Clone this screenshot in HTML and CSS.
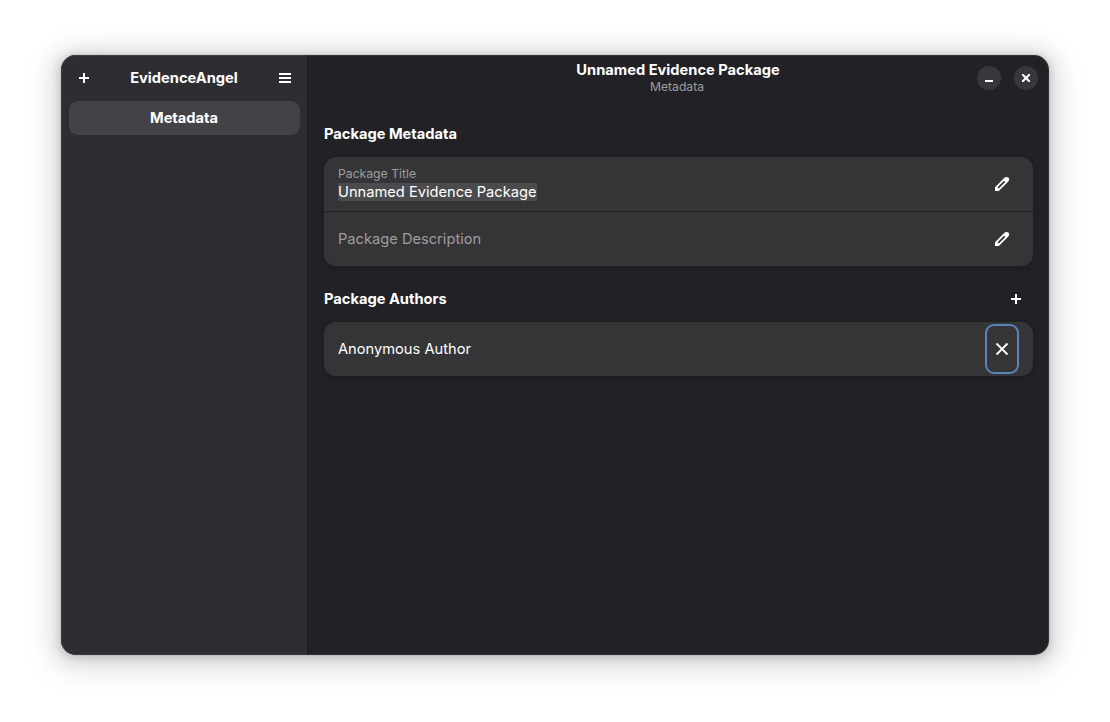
FILE: index.html
```
<!DOCTYPE html>
<html lang="en">
<head>
<meta charset="utf-8">
<title>EvidenceAngel</title>
<link rel="stylesheet" href="styles.css">
</head>
<body>
<div class="window">
  <aside class="sidebar">
    <header class="sidebar-header">
      <button class="icon-button" aria-label="Add"><svg class="icon" viewBox="0 0 16 16"><path d="M7 3h2v4h4v2H9v4H7V9H3V7h4z"/></svg></button>
      <h1 class="app-name">EvidenceAngel</h1>
      <button class="icon-button" aria-label="Menu"><svg class="icon" viewBox="0 0 16 16"><path d="M2 3h12v2H2zM2 7h12v2H2zM2 11h12v2H2z"/></svg></button>
    </header>
    <nav class="nav"><a class="nav-item">Metadata</a></nav>
  </aside>
  <main class="content">
    <header class="content-header">
      <div class="titles">
        <div class="title">Unnamed Evidence Package</div>
        <div class="subtitle">Metadata</div>
      </div>
      <div class="controls">
        <button class="window-button" aria-label="Minimize"><svg class="icon" viewBox="0 0 16 16"><path d="M4 10h8v2H4z"/></svg></button>
        <button class="window-button" aria-label="Close"><svg class="icon" viewBox="0 0 16 16"><path d="M4 4h1.500L8 6.500 10.500 4H12v1.500L9.500 8 12 10.500V12h-1.500L8 9.500 5.500 12H4v-1.500L6.500 8 4 5.500z"/></svg></button>
      </div>
    </header>
    <section class="group">
      <div class="group-header"><h2 class="group-title">Package Metadata</h2></div>
      <div class="card">
        <div class="row">
          <div class="field">
            <div class="field-label">Package Title</div>
            <div class="field-value"><span class="selected">Unnamed Evidence Package</span></div>
          </div>
          <svg class="icon edit" viewBox="0 0 16 16"><path fill-rule="evenodd" d="M10.200 1.900C11.400.700 13.200.500 14.400 1.600S15.300 4.600 14.100 5.800L5.300 14.500 4.800 15H1v-3.800l.500-.500zM10 4.700 4 10.700a.9.9 0 0 0 0 1.300.9.9 0 0 0 1.300 0L11.300 6z"/></svg>
        </div>
        <div class="row">
          <div class="placeholder">Package Description</div>
          <svg class="icon edit" viewBox="0 0 16 16"><path fill-rule="evenodd" d="M10.200 1.900C11.400.700 13.200.500 14.400 1.600S15.300 4.600 14.100 5.800L5.300 14.500 4.800 15H1v-3.800l.500-.500zM10 4.700 4 10.700a.9.9 0 0 0 0 1.300.9.9 0 0 0 1.300 0L11.300 6z"/></svg>
        </div>
      </div>
    </section>
    <section class="group">
      <div class="group-header">
        <h2 class="group-title">Package Authors</h2>
        <button class="icon-button" aria-label="Add author"><svg class="icon" viewBox="0 0 16 16"><path d="M7 3h2v4h4v2H9v4H7V9H3V7h4z"/></svg></button>
      </div>
      <div class="card">
        <div class="row">
          <div class="field-value">Anonymous Author</div>
          <button class="remove" aria-label="Remove author"><svg class="icon" viewBox="0 0 16 16"><path class="cross" d="M2.500 2.500 13.500 13.500M13.500 2.500 2.500 13.500"/></svg></button>
        </div>
      </div>
    </section>
  </main>
</div>
</body>
</html>
```

FILE: styles.css
```
* { box-sizing: border-box; }
body {
  margin: 0;
  padding: 55px 61px 67px;
  height: 722px;
  background: #fff;
  color: #fff;
  font: 14.667px/18px Inter, sans-serif;
  overflow: hidden;
}
h1, h2 { margin: 0; font-size: inherit; font-weight: 700; }
button { border: 0; padding: 0; background: none; color: inherit; display: flex; align-items: center; justify-content: center; }
.icon { width: 16px; height: 16px; fill: currentColor; display: block; flex: none; }
.window {
  display: flex;
  height: 600px;
  border-radius: 15px;
  background: #222226;
  box-shadow: 0 2px 8px 2px rgba(0,0,0,.13), 0 3px 20px 10px rgba(0,0,0,.09), 0 6px 32px 16px rgba(0,0,0,.04), 0 0 0 1px rgba(0,0,0,.05);
  position: relative;
}
.window::after {
  content: "";
  position: absolute;
  inset: 0;
  border-radius: inherit;
  box-shadow: inset 0 0 0 1px rgba(255,255,255,.07);
  pointer-events: none;
}
.sidebar {
  width: 246px;
  background: #2e2e32;
  border-radius: 15px 0 0 15px;
}
.sidebar-header {
  height: 46px;
  padding: 0 5px 0 6px;
  display: flex;
  align-items: center;
  justify-content: space-between;
}
.app-name { padding-right: 1px; }
.icon-button { width: 34px; height: 34px; }
.nav { padding: 0 7px 0 8px; }
.nav-item {
  display: flex;
  align-items: center;
  justify-content: center;
  height: 34px;
  padding-right: 1px;
  border-radius: 9px;
  background: #434347;
  font-weight: 700;
}
.content { flex: 1; box-shadow: inset 1px 0 rgba(0,0,0,.1); }
.content-header {
  height: 46px;
  display: grid;
  grid-template-columns: 1fr auto 1fr;
  padding-right: 11px;
  padding-left: 11px;
  align-items: center;
}
.titles { grid-column: 2; text-align: center; padding-bottom: 2px; }
.title { font-weight: 700; }
.subtitle { font-size: 12.2px; line-height: 15px; color: #9c9c9e; padding-right: 2px; }
.controls { display: flex; justify-content: flex-end; gap: 13px; }
.window-button { width: 24px; height: 24px; border-radius: 50%; background: #38383c; }
.group { padding: 0 16px 0 17px; margin-top: 16px; }
.group-header {
  height: 34px;
  margin-bottom: 6px;
  display: flex;
  align-items: center;
  justify-content: space-between;
}
.card {
  border-radius: 12px;
  background: #353537;
  box-shadow: 0 0 0 1px rgba(0,0,6,.03), 0 1px 3px 1px rgba(0,0,6,.07), 0 2px 6px 2px rgba(0,0,6,.03);
}
.row {
  height: 54px;
  padding: 0 14px;
  display: flex;
  align-items: center;
  justify-content: space-between;
}
.row + .row { border-top: 1px solid #222226; height: 55px; }
.field { padding-bottom: 2px; }
.field-label { font-size: 12.2px; line-height: 18px; color: #9d9d9e; }
.field-value { line-height: 18px; }
.selected { display: block; background: #4b4b4d; }
.placeholder { color: #9d9d9e; }
.edit { margin-right: 9px; }
.remove {
  width: 34px;
  height: 50px;
  border: 2px solid #5a82bb;
  border-radius: 9px;
}
.cross { stroke: currentColor; stroke-width: 1.8; fill: none; }
```
